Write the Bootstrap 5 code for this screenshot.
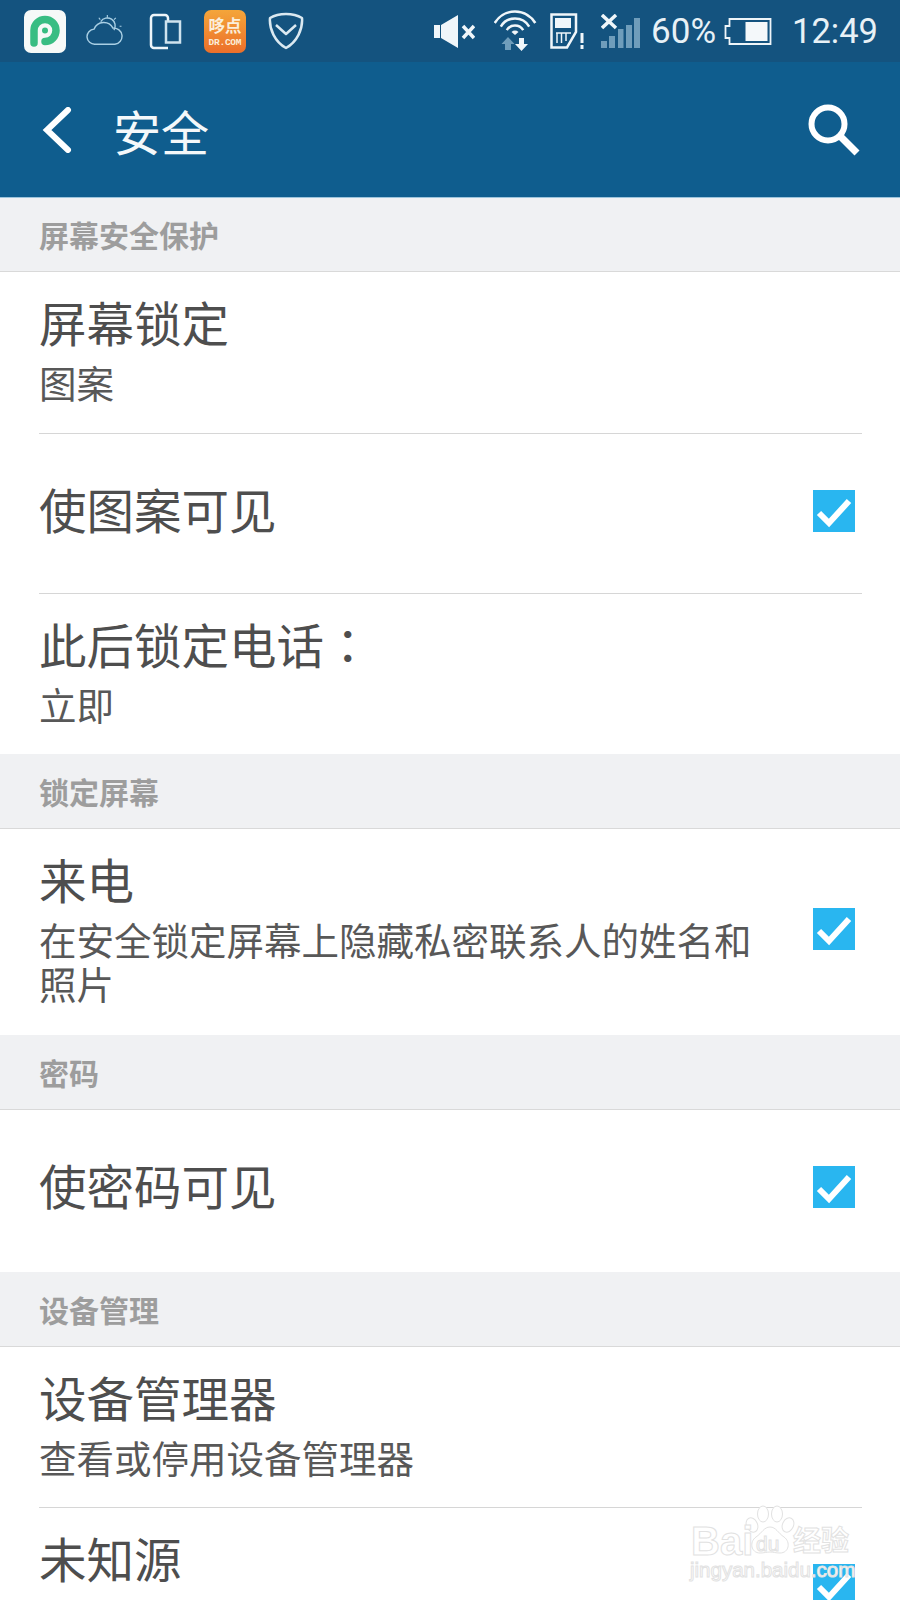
<!DOCTYPE html>
<html lang="zh">

<head>
    <meta charset="utf-8">
    <title>安全</title>
    <link href="https://cdn.jsdelivr.net/npm/bootstrap@5.3.0/dist/css/bootstrap.min.css" rel="stylesheet">
    <style>
        html, body {
            height: 1600px;
            overflow: hidden;
        }

        body {
            background-color: #fff;
            font-family: "Roboto", "Noto Sans CJK SC", sans-serif;
        }

        .phone {
            position: relative;
            height: 1600px;
            overflow: hidden;
        }

        .status-bar {
            height: 62px;
            background-color: #14537f;
            color: #e8f1f6;
            padding-left: 24px;
            padding-right: 22px;
        }

        .status-bar svg {
            display: block;
            flex: none;
        }

        .status-left { gap: 22px; }
        .st-cloud { margin-left: -2px; margin-right: 4px; }

        .st-wifi { margin-left: 19px; }
        .st-sim { margin-left: 12px; }
        .st-signal { margin-left: 16px; }

        .status-pct {
            font-size: 35px;
            line-height: 1;
            margin-left: 10px;
            margin-right: 8px;
        }

        .status-time {
            font-size: 34.5px;
            line-height: 1;
            margin-left: 20px;
        }

        .app-bar {
            height: 136px;
            background-color: #0f5d8e;
            border-bottom: 1px solid #9cc4dc;
            padding-left: 42px;
            padding-right: 40px;
            color: #fff;
        }

        .app-title {
            font-family: "Noto Sans CJK SC", sans-serif;
            font-size: 48px;
            line-height: 1;
            margin-left: 41px;
            color: #f4f8fa;
        }

        .sec-head {
            height: 75px;
            background-color: #f0f1f3;
            border-bottom: 1px solid #d9d9d9;
            padding-left: 39px;
            font-family: "Noto Sans CJK SC", sans-serif;
            font-size: 30px;
            font-weight: 700;
            line-height: 1;
            color: #9d9d9d;
        }

        .sec-head.first {
            height: 74px;
            padding-bottom: 2px;
        }

        .pref {
            padding-top: 21px;
            padding-left: 39px;
            padding-right: 45px;
            font-family: "Noto Sans CJK SC", sans-serif;
        }

        .pref-solo { padding-top: 46px; }

        .pref-title {
            font-size: 47.5px;
            line-height: 58px;
            color: #4e4e4e;
        }

        .pref-colon { font-family: "Noto Sans CJK TC", sans-serif; }

        .pref-sub {
            margin-top: 9px;
            font-size: 37.5px;
            line-height: 44px;
            color: #585858;
            width: 720px;
        }

        .pref-line {
            height: 1px;
            margin-left: 39px;
            margin-right: 38px;
            background-color: #d6d6d6;
        }

        .tick {
            width: 42px;
            height: 42px;
            margin-top: 10px;
            background-color: #29b6f0;
            flex: none;
        }

        .tick svg { display: block; }
        .tick-call { margin-top: 58px; }
        .tick-last { margin-top: 35px; }

        .h-159 { height: 159px; }
        .h-160 { height: 160px; }
        .h-161 { height: 161px; }
        .h-162 { height: 162px; }
        .h-206 { height: 206px; }
        .h-last { height: 92px; }

        .watermark {
            position: absolute;
            left: 688px;
            top: 1500px;
            width: 170px;
            height: 92px;
            color: #fff;
            font-family: "Liberation Sans", sans-serif;
            -webkit-text-stroke: 1px #e2e2e2;
        }

        .wm-bai {
            position: absolute;
            left: 3px;
            top: 22px;
            font-size: 40px;
            line-height: 38px;
            font-weight: 700;
        }

        .wm-du {
            position: absolute;
            left: 68px;
            top: 33px;
            font-size: 21px;
            line-height: 1;
        }

        .wm-cn {
            position: absolute;
            left: 105px;
            top: 25px;
            font-family: "Noto Sans CJK SC", sans-serif;
            font-size: 28px;
            line-height: 1;
            font-weight: 700;
            white-space: nowrap;
        }

        .wm-url {
            position: absolute;
            left: 2px;
            top: 60px;
            font-size: 20.5px;
            line-height: 1;
            white-space: nowrap;
        }

        .wm-paw {
            position: absolute;
            left: 57px;
            top: 5px;
        }
    </style>
</head>

<body>
    <div class="phone">
        <!-- status bar -->
        <div class="status-bar d-flex align-items-center justify-content-between">
            <div class="status-left d-flex align-items-center">
                <svg width="42" height="43" viewBox="0 0 42 43">
                    <rect width="42" height="43" rx="7" fill="#f6f9f8" />
                    <path d="M10 33V20.500a11 11 0 1 1 11 11" fill="none" stroke="#38bd83" stroke-width="7.500" stroke-linecap="round" />
                    <circle cx="21" cy="20.500" r="3" fill="#38bd83" />
                </svg>
                <svg class="st-cloud" width="37" height="34" viewBox="0 0 38 36" fill="none" stroke="#a9cfe4" stroke-width="1.500">
                    <path d="M9 32a8 8 0 0 1-1-16 11 11 0 0 1 20-1 8.500 8.500 0 0 1 2 17z" />
                    <path d="M15 8a8 8 0 0 1 14 9" />
                    <path d="M22 1v3M13 4l1.500 2M31 4l-2 2M35 13h2" stroke-width="1.200" />
                </svg>
                <svg width="33" height="37" viewBox="0 0 33 37" fill="none" stroke="#eef5f9" stroke-width="2.500">
                    <path d="M19 35H5a3 3 0 0 1-3-3V5a3 3 0 0 1 3-3h11a3 3 0 0 1 3 3v3" />
                    <rect x="17" y="8.500" width="14" height="21" stroke="#cfe3ee" />
                </svg>
                <svg width="42" height="43" viewBox="0 0 42 43">
                    <defs>
                        <linearGradient id="dd" x1="0" y1="0" x2="0" y2="1">
                            <stop offset="0" stop-color="#f4a53a" />
                            <stop offset="1" stop-color="#ec6f2a" />
                        </linearGradient>
                    </defs>
                    <rect width="42" height="43" rx="7" fill="url(#dd)" />
                    <text x="21" y="22" text-anchor="middle" font-size="16.500" font-weight="700" fill="#fbeeda" font-family="Noto Sans CJK SC">哆点</text>
                    <text x="21" y="35" text-anchor="middle" font-size="9.500" font-weight="700" fill="#fbeeda" font-family="Liberation Mono" textLength="33">DR.COM</text>
                </svg>
                <svg width="36" height="38" viewBox="0 0 36 38" fill="none" stroke="#dbe9f1" stroke-width="2.500" stroke-linejoin="round">
                    <path d="M18 2c5 0 11 1 16 4 1 11-5 24-16 30C7 30 1 17 2 6c5-3 11-4 16-4z" />
                    <path d="M8 13l10 9 10-9" />
                </svg>
            </div>
            <div class="d-flex align-items-center">
                <svg width="41" height="33" viewBox="0 0 41 33" fill="#f0f6fa">
                    <path d="M0 10h6v13H0zM7 10L24 0v33L7 23z" />
                    <path d="M29 11l11 12M40 11L29 23" stroke="#f0f6fa" stroke-width="3.500" fill="none" />
                </svg>
                <svg class="st-wifi" width="44" height="42" viewBox="0 0 44 42" fill="none" stroke="#f0f6fa" stroke-width="2.500">
                    <path d="M0.700 13A23.600 23.600 0 0 1 41.300 13" />
                    <path d="M6.800 16.600A16.500 16.500 0 0 1 35.200 16.600" />
                    <path d="M12.800 20.200A9.500 9.500 0 0 1 29.200 20.200" />
                    <path d="M21 25l-3.500-3a5 5 0 0 1 7 0z" fill="#f0f6fa" stroke="none" />
                    <path d="M14 27l6.500 7H17v6h-6v-6H7.500z" fill="#6f9dbb" stroke="none" />
                    <path d="M25 28h5v6h4l-6.500 7-6.500-7h4z" fill="#f0f6fa" stroke="none" />
                </svg>
                <svg class="st-sim" width="35" height="36" viewBox="0 0 35 36" fill="none" stroke="#f0f6fa" stroke-width="2.500">
                    <path d="M1.500 1.500H26V19l-9 15.500H1.500z" />
                    <rect x="5" y="5" width="16" height="10" fill="#f0f6fa" stroke="none" />
                    <path d="M6 20h15M7 20v10M11.500 20v10M16 20v8" stroke-width="1.500" />
                    <path d="M32 20v10M32 32v4" stroke-width="3" />
                </svg>
                <svg class="st-signal" width="40" height="35" viewBox="0 0 40 35">
                    <path d="M1 1l14 13M15 1L1 14" stroke="#f0f6fa" stroke-width="3.500" />
                    <path d="M0 27h6v7H0zM8 22h6v12H8zM17 15h5.500v19H17zM25 11h6v23h-6zM33 4h6v30h-6z" fill="#6f9dbb" />
                </svg>
                <span class="status-pct">60%</span>
                <svg width="48" height="27" viewBox="0 0 47 27" fill="none" stroke="#eef5f9" stroke-width="1.800">
                    <path d="M5 1h41v25H5v-6H1V8h4z" />
                    <rect x="21" y="4" width="22" height="19" fill="#f4f8fa" stroke="none" />
                </svg>
                <span class="status-time">12:49</span>
            </div>
        </div>

        <!-- app bar -->
        <div class="app-bar d-flex align-items-center justify-content-between">
            <div class="d-flex align-items-center">
                <svg width="30" height="46" viewBox="0 0 30 46" fill="none" stroke="#fff" stroke-width="6" stroke-linecap="round" stroke-linejoin="miter">
                    <path d="M26 3L5 23l21 20" />
                </svg>
                <span class="app-title">安全</span>
            </div>
            <svg width="52" height="52" viewBox="0 0 52 52" fill="none" stroke="#fff">
                <circle cx="20" cy="20" r="16.500" stroke-width="6" />
                <path d="M32 32l17 17" stroke-width="7" />
            </svg>
        </div>

        <!-- 屏幕安全保护 -->
        <div class="sec-head first d-flex align-items-center">屏幕安全保护</div>
        <div class="pref h-161 d-flex justify-content-between">
            <div>
                <div class="pref-title">屏幕锁定</div>
                <div class="pref-sub">图案</div>
            </div>
        </div>
        <div class="pref-line"></div>
        <div class="pref pref-solo h-159 d-flex justify-content-between">
            <div class="pref-title">使图案可见</div>
            <div class="tick"><svg width="42" height="42" viewBox="0 0 42 42" fill="none" stroke="#fff" stroke-width="6"><path d="M6 23l10 10L36 11" /></svg></div>
        </div>
        <div class="pref-line"></div>
        <div class="pref h-160 d-flex justify-content-between">
            <div>
                <div class="pref-title">此后锁定电话<span class="pref-colon" lang="zh-TW">：</span></div>
                <div class="pref-sub">立即</div>
            </div>
        </div>

        <!-- 锁定屏幕 -->
        <div class="sec-head d-flex align-items-center">锁定屏幕</div>
        <div class="pref h-206 d-flex justify-content-between">
            <div>
                <div class="pref-title">来电</div>
                <div class="pref-sub">在安全锁定屏幕上隐藏私密联系人的姓名和照片</div>
            </div>
            <div class="tick tick-call"><svg width="42" height="42" viewBox="0 0 42 42" fill="none" stroke="#fff" stroke-width="6"><path d="M6 23l10 10L36 11" /></svg></div>
        </div>

        <!-- 密码 -->
        <div class="sec-head d-flex align-items-center">密码</div>
        <div class="pref pref-solo h-162 d-flex justify-content-between">
            <div class="pref-title">使密码可见</div>
            <div class="tick"><svg width="42" height="42" viewBox="0 0 42 42" fill="none" stroke="#fff" stroke-width="6"><path d="M6 23l10 10L36 11" /></svg></div>
        </div>

        <!-- 设备管理 -->
        <div class="sec-head d-flex align-items-center">设备管理</div>
        <div class="pref h-160 d-flex justify-content-between">
            <div>
                <div class="pref-title">设备管理器</div>
                <div class="pref-sub">查看或停用设备管理器</div>
            </div>
        </div>
        <div class="pref-line"></div>
        <div class="pref h-last d-flex justify-content-between">
            <div class="pref-title">未知源</div>
            <div class="tick tick-last"><svg width="42" height="42" viewBox="0 0 42 42" fill="none" stroke="#fff" stroke-width="6"><path d="M6 23l10 10L36 11" /></svg></div>
        </div>

        <!-- watermark over the list -->
        <div class="watermark">
            <svg class="wm-paw" width="50" height="50" viewBox="0 0 50 50" fill="#fff" stroke="#e2e2e2" stroke-width="1">
                <ellipse cx="7" cy="20" rx="5.500" ry="7.500" transform="rotate(-25 7 20)" />
                <ellipse cx="18" cy="9" rx="5.500" ry="8" />
                <ellipse cx="32" cy="9" rx="5.500" ry="8" />
                <ellipse cx="43" cy="20" rx="5.500" ry="7.500" transform="rotate(25 43 20)" />
                <path d="M25 22c6 0 8 6 14 10 7 5 5 16-4 16-4 0-7-1-10-1s-6 1-10 1c-9 0-11-11-4-16 6-4 8-10 14-10z" />
            </svg>
            <span class="wm-bai">Bai</span>
            <span class="wm-du">du</span>
            <span class="wm-cn">经验</span>
            <span class="wm-url">jingyan.baidu.com</span>
        </div>
    </div>

    <script src="https://cdn.jsdelivr.net/npm/bootstrap@5.3.0/dist/js/bootstrap.bundle.min.js"></script>
</body>

</html>
